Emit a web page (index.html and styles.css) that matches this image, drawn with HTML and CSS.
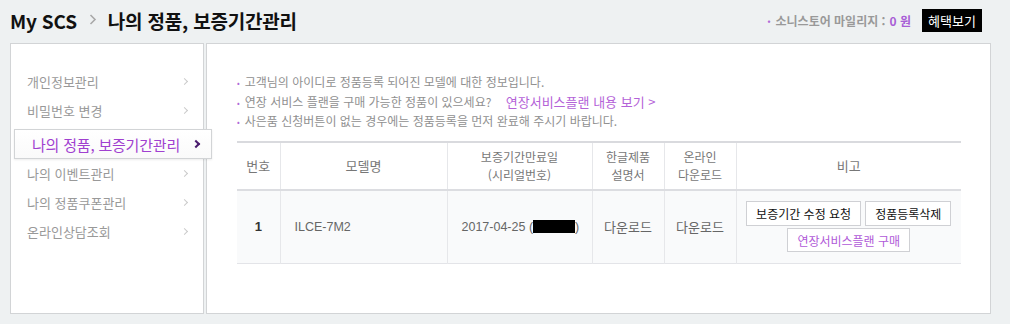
FILE: index.html
```html
<!DOCTYPE html>
<html lang="ko">
<head>
  <meta charset="UTF-8" />
  <title>나의 정품, 보증기간관리 - My SCS</title>
  <link rel="stylesheet" href="styles.css">
</head>
<body>

  <div class="top">
    <h1 class="crumb">My SCS
      <svg class="crumb-arrow" width="8" height="11" viewBox="0 0 8 11"><path d="M1.5 1 L6 5.5 L1.5 10" fill="none" stroke="#a9a9a9" stroke-width="1.6"/></svg>
      나의 정품, 보증기간관리</h1>
    <div class="mileage">
      <span class="dot">•</span> 소니스토어 마일리지 : <span class="point">0 원</span>
      <button class="benefit">혜택보기</button>
    </div>
  </div>

  <div class="wrap">
    <ul class="side">
      <li><a href="#">개인정보관리</a></li>
      <li><a href="#">비밀번호 변경</a></li>
      <li class="on"><a href="#">나의 정품, 보증기간관리</a></li>
      <li><a href="#">나의 이벤트관리</a></li>
      <li><a href="#">나의 정품쿠폰관리</a></li>
      <li><a href="#">온라인상담조회</a></li>
    </ul>

    <div class="content">
      <ul class="notice">
        <li>고객님의 아이디로 정품등록 되어진 모델에 대한 정보입니다.</li>
        <li>연장 서비스 플랜을 구매 가능한 정품이 있으세요? <a href="#" class="plan-link">연장서비스플랜 내용 보기 &gt;</a></li>
        <li>사은품 신청버튼이 없는 경우에는 정품등록을 먼저 완료해 주시기 바랍니다.</li>
      </ul>

      <table class="list">
        <colgroup>
          <col class="c-no"><col class="c-model"><col class="c-date"><col class="c-doc"><col class="c-down"><col>
        </colgroup>
        <thead>
          <tr>
            <th>번호</th>
            <th>모델명</th>
            <th><span class="th-line">보증기간만료일</span><span class="th-line">(시리얼번호)</span></th>
            <th><span class="th-line">한글제품</span><span class="th-line">설명서</span></th>
            <th><span class="th-line">온라인</span><span class="th-line">다운로드</span></th>
            <th>비고</th>
          </tr>
        </thead>
        <tbody>
          <tr>
            <td class="num">1</td>
            <td class="left">ILCE-7M2</td>
            <td class="left">2017-04-25 (<span class="masked"></span>)</td>
            <td>다운로드</td>
            <td>다운로드</td>
            <td class="etc">
              <div class="btn-row">
                <button class="btn">보증기간 수정 요청</button>
                <button class="btn">정품등록삭제</button>
              </div>
              <div class="btn-row">
                <button class="btn btn-plan">연장서비스플랜 구매</button>
              </div>
            </td>
          </tr>
        </tbody>
      </table>
    </div>
  </div>

</body>
</html>
```

FILE: styles.css
```css
body {
  margin: 0;
  background: #eef1f2;
  font-family: "Noto Sans CJK KR", "Noto Sans", sans-serif;
  color: #888;
  width: 1010px;
  height: 324px;
  overflow: hidden;
}

ul {
  list-style: none;
  margin: 0;
  padding: 0;
}

a {
  text-decoration: none;
  color: inherit;
}

.top {
  height: 43px;
  display: flex;
  justify-content: space-between;
  align-items: center;
  padding: 0 28px 0 10px;
}

.crumb {
  margin: 0;
  font-size: 19px;
  font-weight: bold;
  color: #111;
  letter-spacing: -0.2px;
  position: relative;
  top: -1px;
  display: flex;
  align-items: center;
}

.crumb-arrow {
  margin: 0 11px 0 12px;
  position: relative;
  top: -1px;
}

.mileage {
  display: flex;
  align-items: center;
  font-size: 12px;
  font-weight: bold;
  color: #999;
  margin-top: -3px;
}

.mileage .dot {
  color: #b06ad8;
  font-size: 8px;
  margin-right: 5px;
}

.point {
  color: #a85fd6;
  margin-left: 4px;
}

.benefit {
  margin-left: 11px;
  background: #000;
  color: #fff;
  border: none;
  font-family: inherit;
  font-size: 13px;
  height: 23px;
  width: 60px;
  padding: 0;
}

.wrap {
  display: flex;
  gap: 2px;
  margin: 0 19px 0 10px;
  height: 271px;
}

.side {
  width: 192px;
  background: #fff;
  border: 1px solid #d2d4d6;
  padding-top: 23px;
}

.side li a {
  display: flex;
  justify-content: space-between;
  align-items: center;
  height: 29px;
  padding: 0 14px 0 16px;
  font-size: 13px;
  color: #999;
}

.side li a::after {
  content: "";
  width: 4px;
  height: 4px;
  border-top: 1.5px solid #cacaca;
  border-right: 1.5px solid #cacaca;
  transform: rotate(45deg);
  margin-right: 2px;
}

.side li.on {
  position: relative;
  z-index: 1;
  margin: 4px -9px 0 3px;
}

.side li.on a {
  height: 30px;
  box-sizing: border-box;
  background: linear-gradient(#fff, #fafafa);
  border: 1px solid #d2d4d6;
  box-shadow: 0 1px 2px rgba(0,0,0,0.08);
  padding: 0 10px 0 17px;
  font-size: 15px;
  color: #a040d0;
  letter-spacing: -0.2px;
}

.side li.on a::after {
  border-color: #4a1c6e;
  border-width: 2px;
}

.content {
  flex: 1;
  background: #fff;
  border: 1px solid #d2d4d6;
  padding: 29px 29px 0 30px;
}

.notice li {
  font-size: 12px;
  color: #909090;
  line-height: 18.5px;
}

.notice li::before {
  content: "•";
  color: #b06ad8;
  font-size: 8px;
  margin-right: 5px;
  vertical-align: 1px;
}

.plan-link {
  color: #b462d8;
  font-size: 13px;
  margin-left: 11px;
}

.list {
  width: 100%;
  table-layout: fixed;
  margin-top: 9px;
  border-collapse: collapse;
  border-top: 2px solid #d9dade;
  border-bottom: 1px solid #e3e4e8;
  font-size: 13px;
}

.c-no { width: 43px; }
.c-model { width: 167px; }
.c-date { width: 145px; }
.c-doc { width: 72px; }
.c-down { width: 72px; }

.list th {
  height: 46px;
  padding: 0;
  font-weight: normal;
  color: #777;
  border-left: 1px solid #e6e7ea;
  border-bottom: 2px solid #dcdde1;
}

.th-line {
  display: block;
  font-size: 12px;
  line-height: 17.5px;
}

.list th:first-child,
.list td:first-child {
  border-left: none;
}

.list td {
  height: 72px;
  padding: 0;
  background: #f9fafb;
  color: #666;
  text-align: center;
  border-left: 1px solid #e6e7ea;
}

.list td.num {
  font-weight: bold;
  color: #333;
  font-family: "Liberation Sans", sans-serif;
}

.list td.left {
  text-align: left;
  padding-left: 14px;
  font-family: "Liberation Sans", sans-serif;
  font-size: 12.5px;
}

.masked {
  display: inline-block;
  width: 42px;
  height: 13px;
  background: #000;
  vertical-align: -2px;
}

.etc {
  padding: 0 10px;
}

.btn-row {
  display: flex;
  justify-content: center;
  gap: 4px;
  margin: 2px 0;
}

.btn {
  height: 25px;
  padding: 0 9px;
  background: #fff;
  border: 1px solid #cfd0d4;
  font-family: inherit;
  font-size: 12px;
  color: #111;
  white-space: nowrap;
}

.btn-plan {
  color: #b05ad8;
  height: 24px;
}
```
